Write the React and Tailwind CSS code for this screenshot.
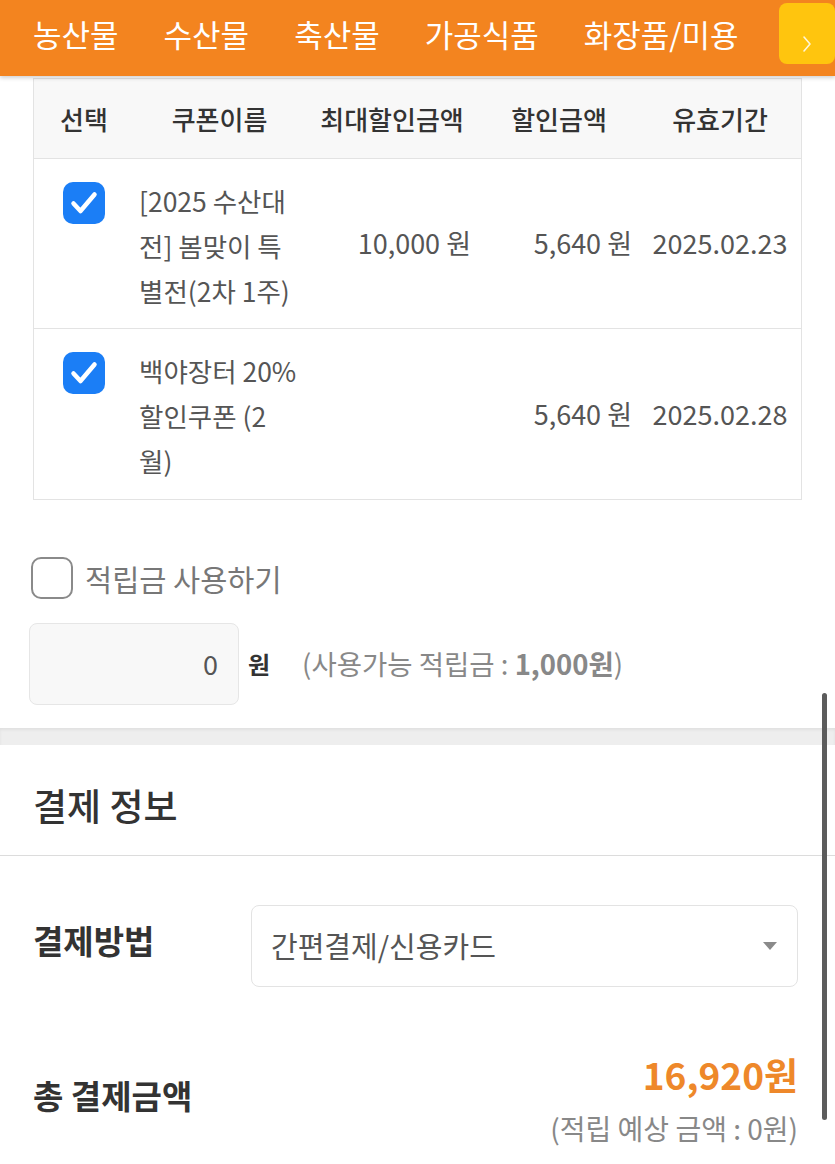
import { useState } from 'react'

const NAV = ['농산물', '수산물', '축산물', '가공식품', '화장품/미용']

const COUPONS = [
  {
    id: 1,
    name: ['[2025 수산대', '전] 봄맞이 특', '별전(2차 1주)'],
    max: '10,000 원',
    discount: '5,640 원',
    until: '2025.02.23',
  },
  {
    id: 2,
    name: ['백야장터 20%', '할인쿠폰 (2', '월)'],
    max: '',
    discount: '5,640 원',
    until: '2025.02.28',
  },
]

const COLS = 'grid grid-cols-[100px_171px_174px_160px_1fr]'

function CheckBox({ checked }) {
  if (!checked) {
    return <span className="block h-[42px] w-[42px] rounded-[10px] border-[2.5px] border-[#8a8a8a] bg-white" />
  }
  return (
    <span className="flex h-[42px] w-[42px] items-center justify-center rounded-[10px] bg-[#1b7ef6]">
      <svg width="42" height="42" viewBox="0 0 42 42" fill="none">
        <path d="M10.5 21.5 L17.5 29 L31.5 12.5" stroke="#fff" strokeWidth="4.5" strokeLinecap="round" strokeLinejoin="round" />
      </svg>
    </span>
  )
}

export default function App() {
  const [usePoint, setUsePoint] = useState(false)

  return (
    <div className="relative h-[1164px] w-[835px] overflow-hidden bg-white font-['Noto_Sans_CJK_KR',sans-serif] text-[#333]">
      <nav className="relative z-10 flex h-[76px] items-center gap-[45px] overflow-hidden whitespace-nowrap bg-[#f3841f] pb-[10px] pl-[33px] shadow-[0_2px_4px_rgba(0,0,0,0.18)]">
        {NAV.map((n) => (
          <span key={n} className="text-[31px] leading-none text-white">
            {n}
          </span>
        ))}
        <span className="absolute right-0 top-[3px] flex h-[61px] w-[56px] items-center justify-center rounded-[8px] bg-[#ffc50e] pt-[20px]">
          <svg width="12" height="20" viewBox="0 0 12 20" fill="none">
            <path d="M3 3 L9 10 L3 17" stroke="#fff6d8" strokeWidth="1.6" strokeLinecap="round" strokeLinejoin="round" />
          </svg>
        </span>
      </nav>

      <section className="px-[33px] pt-[2px]">
        <div className="border border-[#e3e3e3]">
          <div className={`${COLS} h-[80px] items-center border-b border-[#e3e3e3] bg-[#f8f8f8] text-center text-[26px] font-medium text-[#333]`}>
            <span>선택</span>
            <span>쿠폰이름</span>
            <span>최대할인금액</span>
            <span>할인금액</span>
            <span>유효기간</span>
          </div>
          {COUPONS.map((c, i) => (
            <div
              key={c.id}
              className={`${COLS} h-[170px] text-[#555] ${i < COUPONS.length - 1 ? 'border-b border-[#e3e3e3]' : ''}`}
            >
              <div className="flex justify-center pt-[23px]">
                <CheckBox checked />
              </div>
              <div className="whitespace-nowrap pl-[5px] pt-[19px] text-[26.5px] leading-[45px]">
                {c.name.map((l) => (
                  <div key={l}>{l}</div>
                ))}
              </div>
              <div className="flex items-center justify-end whitespace-nowrap pr-[8px] text-[27px]">{c.max}</div>
              <div className="flex items-center justify-end whitespace-nowrap pr-[7px] text-[27px]">{c.discount}</div>
              <div className="flex items-center justify-center whitespace-nowrap text-[27px]">{c.until}</div>
            </div>
          ))}
        </div>

        <button
          type="button"
          onClick={() => setUsePoint(!usePoint)}
          className="ml-[-2px] mt-[57px] flex h-[42px] items-center gap-[12px]"
        >
          <CheckBox checked={usePoint} />
          <span className="text-[29.5px] leading-[42px] text-[#777]">적립금 사용하기</span>
        </button>

        <div className="ml-[-4px] mt-[24px] flex items-center">
          <div className="flex h-[82px] w-[210px] items-center justify-end rounded-[8px] border border-[#e6e6e6] bg-[#f8f8f8] pr-[20px] text-[27px] text-[#555]">
            0
          </div>
          <span className="ml-[9px] text-[24px] font-bold text-[#333]">원</span>
          <span className="ml-[32px] text-[27.5px] text-[#888]">
            (사용가능 적립금 : <b className="font-bold">1,000원</b>)
          </span>
        </div>
      </section>

      <div className="mt-[23px] h-[17px] bg-[#eeeeee] shadow-[inset_0_2px_3px_rgba(0,0,0,0.06)]" />

      <section>
        <div className="border-b border-[#dcdcdc] pb-[30px] pl-[33px] pt-[40px]">
          <h2 className="text-[37px] font-medium leading-[40px] text-[#333]">결제 정보</h2>
        </div>

        <div className="pl-[33px] pr-[37px] pt-[49px]">
          <div className="flex items-center">
            <span className="w-[218px] pb-[10px] text-[33px] font-bold">결제방법</span>
            <div className="flex h-[82px] flex-1 items-center justify-between rounded-[8px] border border-[#e3e3e3] pl-[19px] pr-[20px] text-[29px] text-[#555]">
              <span>간편결제/신용카드</span>
              <svg width="14" height="8" viewBox="0 0 14 8">
                <path d="M0 0 L14 0 L7 8 Z" fill="#8a8a8a" />
              </svg>
            </div>
          </div>

          <div className="mt-[65px] flex items-start justify-between">
            <span className="mt-[23px] text-[33px] font-semibold leading-[40px]">총 결제금액</span>
            <div className="flex flex-col items-end">
              <span className="text-[37px] font-bold leading-[44px] text-[#ee882a]">16,920원</span>
              <span className="mt-[15px] text-[28px] leading-[34px] text-[#888]">(적립 예상 금액 : 0원)</span>
            </div>
          </div>
        </div>
      </section>

      <div className="absolute left-[822px] top-[693px] h-[427px] w-[5px] rounded-full bg-[#5c5c5c]" />
    </div>
  )
}
